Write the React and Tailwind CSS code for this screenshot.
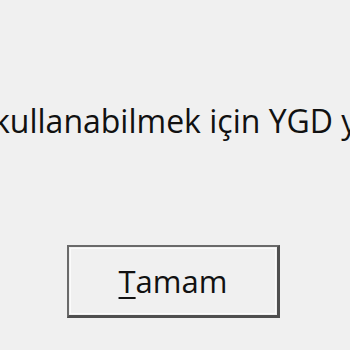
export default function App() {
  return (
    <div className="w-[350px] h-[350px] bg-[#f0f0f0] overflow-hidden flex flex-col" style={{ fontFamily: '"Open Sans", "Noto Sans", sans-serif' }}>
      <div className="mt-[98px] h-[46px] whitespace-nowrap text-[32px] leading-[46px] text-[#111] ml-[-7px]">
        kullanabilmek için YGD yetkiniz olmalıdır.
      </div>
      <div className="mt-[101px] ml-[67px] w-[213px] h-[73px] border-2 border-[#6a6a6a] border-r-[3px] border-b-[3px] border-r-[#4f4f4f] border-b-[#4f4f4f] bg-[#f0f0f0] p-px">
        <div className="w-full h-full border border-[#fbfbfb] flex items-center justify-center text-[31px] text-[#111]">
          <span><span className="underline underline-offset-4 decoration-2">T</span>amam</span>
        </div>
      </div>
    </div>
  );
}
